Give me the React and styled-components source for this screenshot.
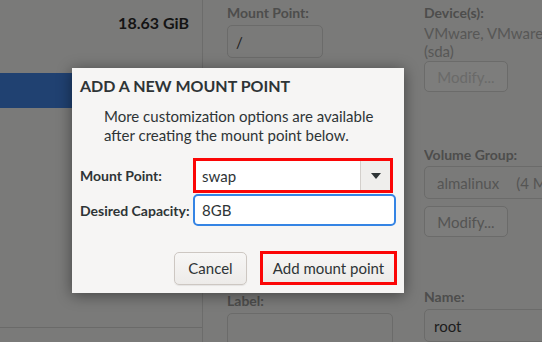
import React from "react";
import styled, { createGlobalStyle } from "styled-components";

const Global = createGlobalStyle`
  html, body {
    margin: 0;
    padding: 0;
    background: #7a7a79;
  }
  body {
    font-family: Lato, "Noto Sans", sans-serif;
    width: 542px;
    height: 342px;
    overflow: hidden;
  }
`;

const Screen = styled("div")`
  position: relative;
  display: flex;
  width: 542px;
  height: 342px;
  background: #7a7a79;
  overflow: hidden;
`;

const Sidebar = styled("div")`
  width: 202px;
  flex-shrink: 0;
  display: flex;
  flex-direction: column;
  border-right: 1px solid #6c6c6b;
`;

const SizeRow = styled("div")`
  height: 45px;
  display: flex;
  align-items: center;
  justify-content: flex-end;
  padding-right: 13px;
  font-size: 16px;
  font-weight: 700;
  color: #141414;
`;

const SelectedRow = styled("div")`
  margin-top: 28px;
  height: 35px;
  background: #204171;
`;

const BottomLine = styled("div")`
  margin-top: auto;
  height: 14px;
  border-top: 1px solid #6a6a69;
`;

const Details = styled("div")`
  flex: 1;
  display: grid;
  grid-template-columns: 197px 1fr;
  padding-left: 24px;
  padding-top: 4px;
  min-width: 0;
`;

const Column = styled("div")`
  display: flex;
  flex-direction: column;
  align-items: flex-start;
  min-width: 0;
  overflow: hidden;
`;

const FieldLabel = styled("div")`
  font-size: 14px;
  font-weight: 700;
  line-height: 18px;
  color: #4d4d4c;
  margin-top: ${(p) => p.$gap || 0}px;
  white-space: nowrap;
`;

const InfoText = styled("div")`
  font-size: 15px;
  line-height: 18px;
  color: #575756;
  white-space: nowrap;
  margin-top: ${(p) => p.$gap || 0}px;
`;

const Field = styled("div")`
  box-sizing: border-box;
  width: ${(p) => p.$w}px;
  height: 33px;
  margin-top: ${(p) => p.$gap || 0}px;
  border: 1px solid #6b6b6a;
  border-radius: 5px;
  display: flex;
  align-items: center;
  padding-left: ${(p) => p.$pad || 8}px;
  font-size: 15px;
  color: ${(p) => p.$color || "#1c1c1c"};
  white-space: nowrap;
  overflow: hidden;
  flex-shrink: 0;
`;

const Free = styled("span")`
  margin-left: 17px;
`;

const GhostButton = styled("div")`
  box-sizing: border-box;
  width: 84px;
  height: 33px;
  margin-top: ${(p) => p.$gap || 0}px;
  border: 1px solid #6b6b6a;
  border-radius: 5px;
  background: #7d7d7c;
  display: flex;
  align-items: center;
  justify-content: center;
  font-size: 15px;
  color: ${(p) => (p.$disabled ? "#6a6a69" : "#545453")};
`;

const Dialog = styled("div")`
  position: absolute;
  left: 72px;
  top: 68px;
  width: 332px;
  height: 225px;
  box-sizing: border-box;
  background: #f6f5f4;
  box-shadow: 0 2px 14px rgba(0, 0, 0, 0.45);
  padding: 8px 7px 8px 8px;
  display: flex;
  flex-direction: column;
  color: #2e3436;
`;

const Title = styled("div")`
  font-size: 16px;
  font-weight: 700;
  line-height: 20px;
`;

const Note = styled("div")`
  margin-top: 11px;
  padding-left: 24px;
  font-size: 15px;
  line-height: 19px;
`;

const Form = styled("div")`
  margin-top: 13px;
  display: grid;
  grid-template-columns: 113px auto;
  row-gap: 1px;
  align-items: center;
  justify-items: start;
`;

const FormLabel = styled("div")`
  font-size: 14px;
  font-weight: 700;
  white-space: nowrap;
`;

const Highlight = styled("div")`
  box-sizing: border-box;
  border: 3px solid #fb0606;
  width: ${(p) => p.$w}px;
  height: ${(p) => p.$h}px;
  display: flex;
`;

const ComboEntry = styled("div")`
  flex: 1;
  background: #ffffff;
  display: flex;
  align-items: center;
  padding-left: 6px;
  font-size: 15px;
`;

const ComboToggle = styled("div")`
  width: 29px;
  background: #efeeec;
  border-left: 1px solid #d3cfcb;
  display: flex;
  align-items: center;
  justify-content: center;
`;

const Entry = styled("div")`
  box-sizing: border-box;
  width: 203px;
  height: 32px;
  border: 2px solid #3584e4;
  border-radius: 5px;
  background: #ffffff;
  display: flex;
  align-items: center;
  padding-left: 7px;
  font-size: 15px;
`;

const Actions = styled("div")`
  margin-top: auto;
  display: flex;
  justify-content: flex-end;
  align-items: center;
  gap: 13px;
`;

const Button = styled("div")`
  box-sizing: border-box;
  height: ${(p) => (p.$inner ? "100%" : "33px")};
  width: ${(p) => (p.$inner ? "100%" : "73px")};
  border: ${(p) => (p.$inner ? "none" : "1px solid #cdc7c2")};
  border-radius: ${(p) => (p.$inner ? "0" : "5px")};
  background: linear-gradient(#f7f6f5, #edebe9);
  box-shadow: ${(p) => (p.$inner ? "none" : "0 1px 1px rgba(0,0,0,0.07)")};
  display: flex;
  align-items: center;
  justify-content: center;
  font-size: 15px;
  color: #2e3436;
`;

export default function App() {
  return (
    <Screen>
      <Global />
      <Sidebar>
        <SizeRow>18.63 GiB</SizeRow>
        <SelectedRow />
        <BottomLine />
      </Sidebar>
      <Details>
        <Column>
          <FieldLabel>Mount Point:</FieldLabel>
          <Field $w={96} $gap={3}>/</Field>
          <FieldLabel $gap={234}>Label:</FieldLabel>
          <Field $w={166} $gap={3} />
        </Column>
        <Column>
          <FieldLabel>Device(s):</FieldLabel>
          <InfoText $gap={2}>VMware, VMware Virtual S</InfoText>
          <InfoText>(sda)</InfoText>
          <GhostButton $gap={1} $disabled>Modify...</GhostButton>
          <FieldLabel $gap={54}>Volume Group:</FieldLabel>
          <Field $w={160} $gap={2} $pad={12} $color="#555554">
            almalinux<Free>(4 MiB free)</Free>
          </Field>
          <GhostButton $gap={7}>Modify...</GhostButton>
          <FieldLabel $gap={51}>Name:</FieldLabel>
          <Field $w={160} $gap={3} $pad={9}>root</Field>
        </Column>
      </Details>

      <Dialog>
        <Title>ADD A NEW MOUNT POINT</Title>
        <Note>
          More customization options are available
          <br />
          after creating the mount point below.
        </Note>
        <Form>
          <FormLabel>Mount Point:</FormLabel>
          <Highlight $w={200} $h={35}>
            <ComboEntry>swap</ComboEntry>
            <ComboToggle>
              <svg width="10" height="6" viewBox="0 0 10 6">
                <path d="M0 0 L10 0 L5 6 Z" fill="#2e3436" />
              </svg>
            </ComboToggle>
          </Highlight>
          <FormLabel>Desired Capacity:</FormLabel>
          <Entry>8GB</Entry>
        </Form>
        <Actions>
          <Button>Cancel</Button>
          <Highlight $w={137} $h={34}>
            <Button $inner>Add mount point</Button>
          </Highlight>
        </Actions>
      </Dialog>
    </Screen>
  );
}
